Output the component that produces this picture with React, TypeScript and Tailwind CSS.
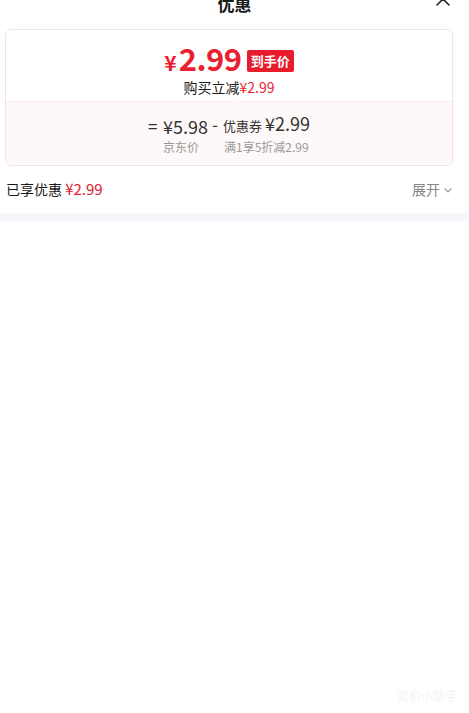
import React from 'react';

const font = { fontFamily: '"Noto Sans CJK SC", "Noto Sans", sans-serif' };

function CloseIcon() {
  return (
    <svg width="16" height="16" viewBox="0 0 16 16" fill="none" stroke="#222" strokeWidth="1.6" strokeLinecap="round">
      <path d="M2 2l12 12M14 2L2 14" />
    </svg>
  );
}

function Chevron() {
  return (
    <svg width="10" height="10" viewBox="0 0 10 10" fill="none" stroke="#999" strokeWidth="1.1">
      <path d="M1.5 3.5L5 7l3.5-3.5" />
    </svg>
  );
}

export default function App() {
  return (
    <div className="w-[469px] h-[713px] bg-white relative overflow-hidden" style={font}>
      {/* Header */}
      <div className="h-[29px] relative">
        <div className="relative -top-[6px] text-center text-[17px] font-bold text-[#1a1a1a] leading-[20px]">优惠</div>
        <div className="absolute right-[18px] -top-[9px]">
          <CloseIcon />
        </div>
      </div>

      {/* Price card */}
      <div className="mx-[5px] w-[448px] rounded-[6px] border border-[#f0e4e6] overflow-hidden">
        <div className="bg-white pt-[12px] pb-[4px] flex flex-col items-center">
          <div className="flex items-center gap-[5px] h-[35px]">
            <div className="flex items-baseline text-[#ea1f30] font-bold leading-[30px]">
              <span className="text-[21px] mr-[2px]">¥</span>
              <span className="text-[31px] tracking-[-0.5px]">2.99</span>
            </div>
            <span className="bg-[#e81c2c] text-white text-[13px] font-bold leading-[22px] px-[4px] rounded-[2px] mt-[3px]">到手价</span>
          </div>
          <div className="text-[14px] leading-[20px] text-[#1a1a1a]">
            购买立减<span className="text-[#ea1f30]">¥2.99</span>
          </div>
        </div>
        <div className="relative h-px bg-[#f6eaec]">
          <div className="absolute left-[224px] -top-[3px] w-0 h-0 border-x-[4px] border-x-transparent border-b-[4px] border-b-[#fff8f8]" />
        </div>
        <div className="bg-[#fff8f8] pt-[9px] pb-[9px] flex justify-center">
          <div className="grid grid-cols-[15px_auto_auto] items-end">
            <span className="text-[17px] text-[#333] leading-[24px]">=</span>
            <span className="text-[18px] text-[#333] leading-[24px] pr-[4px]">¥5.98</span>
            <span className="leading-[24px] text-[#333]">
              <span className="text-[17px]">-</span>
              <span className="text-[13px] ml-[5px]">优惠券</span>
              <span className="text-[18px] ml-[3px]">¥2.99</span>
            </span>
            <span />
            <span className="text-[12px] text-[#999] leading-[18px]">京东价</span>
            <span className="text-[12px] text-[#999] leading-[18px] pl-[12px]">满1享5折减2.99</span>
          </div>
        </div>
      </div>

      {/* Summary */}
      <div className="flex items-center justify-between px-[6px] pr-[16px] h-[47px]">
        <div className="text-[14px] text-[#1a1a1a]">
          已享优惠 <span className="text-[15px] text-[#e0202e]">¥2.99</span>
        </div>
        <div className="flex items-center gap-[3px] text-[14px] text-[#888]">
          展开<Chevron />
        </div>
      </div>
      <div className="h-[8px] bg-[#f6f7fb]" />

      <div className="absolute right-[12px] bottom-[8px] text-[12px] text-[#f3f3f3]">卖价小助手</div>
    </div>
  );
}
